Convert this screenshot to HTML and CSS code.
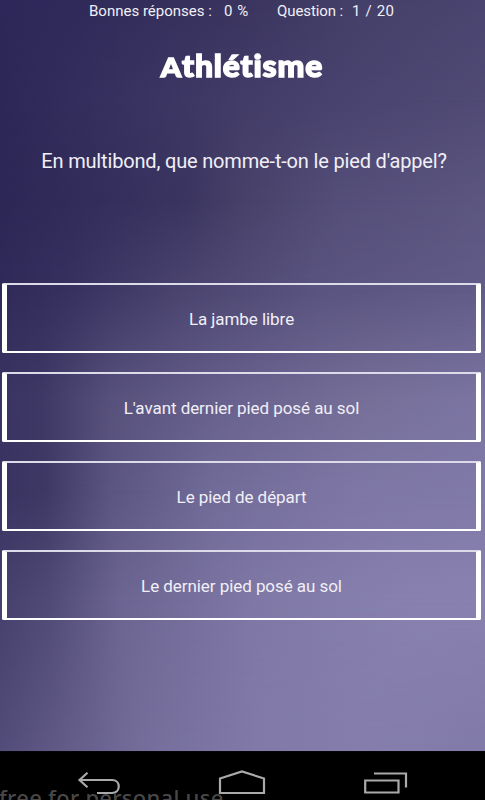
FILE: index.html
```
<!DOCTYPE html>
<html lang="fr">
<head>
<meta charset="utf-8">
<title>Athlétisme</title>
<link rel="stylesheet" href="styles.css">
</head>
<body>
<div class="screen">
  <div class="backdrop" aria-hidden="true">
    <div class="band band-1"></div>
    <div class="band band-2"></div>
    <div class="band band-3"></div>
    <div class="band band-4"></div>
    <div class="band band-5"></div>
    <div class="band band-6"></div>
    <div class="band band-7"></div>
    <div class="band band-8"></div>
  </div>
  <main class="quiz">
    <header class="status">
      <span class="label-score">Bonnes réponses :</span>
      <span class="score">0 %</span>
      <span class="label-question">Question :</span>
      <span class="count">1 / 20</span>
    </header>
    <h1 class="title">Athlétisme</h1>
    <p class="question">En multibond, que nomme-t-on le pied d'appel?</p>
    <div class="answers">
      <button class="answer">La jambe libre</button>
      <button class="answer">L'avant dernier pied posé au sol</button>
      <button class="answer">Le pied de départ</button>
      <button class="answer">Le dernier pied posé au sol</button>
    </div>
  </main>
  <nav class="navbar">
    <svg class="icon back" viewBox="0 0 44 24"><path d="M10.500 .8L2.500 8L10.500 15.200M2 8H35C44 8 44 21 35 21H20"/></svg>
    <svg class="icon home" viewBox="0 0 48 25"><path d="M2 23V8.500L24 1.500L46 8.500V23Z"/></svg>
    <svg class="icon recent" viewBox="0 0 44 22"><path d="M1.200 8.500H34.500V20.500H1.200ZM10 1.500H42V15.500"/></svg>
    <span class="watermark">free for personal use</span>
  </nav>
</div>
</body>
</html>
```
FILE: styles.css
```
* { box-sizing: border-box; }
body { margin: 0; background: #000; }
.screen {
  position: relative;
  display: flex;
  flex-direction: column;
  width: 485px;
  height: 800px;
  overflow: hidden;
  color: #f1eff6;
  font-family: Roboto, sans-serif;
}

/* Each band fades in over the previous one, forming a soft colour mesh. */
.backdrop { position: absolute; inset: 0 0 49px; }
.band {
  position: absolute;
  inset: 0;
  -webkit-mask-image: linear-gradient(transparent var(--from), #000 var(--to));
  mask-image: linear-gradient(transparent var(--from), #000 var(--to));
}
.band-1 { --from: -1px; --to: 0px; background: linear-gradient(90deg, #2e2859, #302a5a 80px, #3a345f 240px, #444069 360px, #4a4570); }
.band-2 { --from: 0px; --to: 100px; background: linear-gradient(90deg, #2d2757, #35305e 100px, #423c68 240px, #4a4470 360px, #504a75); }
.band-3 { --from: 100px; --to: 200px; background: linear-gradient(90deg, #2d2756, #332d5b 90px, #3b3561 190px, #474169 240px, #544e79 340px, #5c5681); }
.band-4 { --from: 200px; --to: 290px; background: linear-gradient(90deg, #302a59, #373160 70px, #4a446f 180px, #5a5480 320px, #625c88); }
.band-5 { --from: 290px; --to: 400px; background: linear-gradient(90deg, #3a3462, #3e3865 40px, #57517c 110px, #69628f 230px, #767099 370px, #7c75a3); }
.band-6 { --from: 400px; --to: 490px; background: linear-gradient(90deg, #393361, #3e3865 45px, #5b5581 110px, #716b98 210px, #7e77a5 350px, #807aa8); }
.band-7 { --from: 490px; --to: 600px; background: linear-gradient(90deg, #46406d, #514b77 50px, #6c6592 120px, #7f78a6 250px, #8881af 400px, #8982b0); }
.band-8 { --from: 600px; --to: 750px; background: linear-gradient(90deg, #524c79, #615a87 60px, #746d9a 140px, #817aa8 260px, #857eac 370px, #817aa8); }

.quiz { position: relative; height: 751px; }
.status { display: flex; padding-left: 89px; height: 22px; font-size: 15px; line-height: 22px; white-space: pre; }
.label-score { width: 135px; }
.score { width: 53px; word-spacing: 1px; }
.label-question { width: 75px; letter-spacing: -.1px; }
.count { letter-spacing: .1px; word-spacing: 1.2px; }
.title {
  margin: 22px 0 0;
  height: 44px;
  padding-right: 1px;
  font: 900 29.5px/44px Lato, sans-serif;
  font-variant-ligatures: none;
  letter-spacing: .8px;
  color: #fff;
  text-align: center;
  -webkit-text-stroke: 1.4px #fff;
  transform: scaleX(1.08);
}
.title::first-letter { font-size: 27px; }
.question { margin: 58px 0 0; height: 30px; padding-left: 3px; font-size: 20px; line-height: 30px; letter-spacing: -.17px; text-align: center; white-space: nowrap; }
.answers { display: flex; flex-direction: column; gap: 19px; margin: 107px 4px 0 2px; }
.answer {
  height: 70px;
  padding: 2px 0 0;
  border: solid #fff;
  border-width: 2px 5px;
  border-top-color: #dddae9;
  border-radius: 2px;
  background: none;
  color: inherit;
  font: 17px/22px Roboto, sans-serif;
  letter-spacing: -.06px;
}
.navbar { position: relative; display: flex; height: 49px; background: #000; border-top: 1px solid #050408; }
.icon { flex: none; fill: none; stroke: #aaa; stroke-width: 2.2; }
.back { width: 44px; height: 24px; margin: 20px 0 0 77px; }
.home { width: 48px; height: 25px; margin: 18px 0 0 97px; }
.recent { width: 44px; height: 22px; margin: 20px 0 0 98px; }
.watermark {
  position: absolute;
  left: -1px;
  top: 31px;
  font: 500 22px/28px "Noto Sans", sans-serif;
  letter-spacing: .27px;
  color: rgba(115, 115, 115, .65);
  white-space: nowrap;
}
```
